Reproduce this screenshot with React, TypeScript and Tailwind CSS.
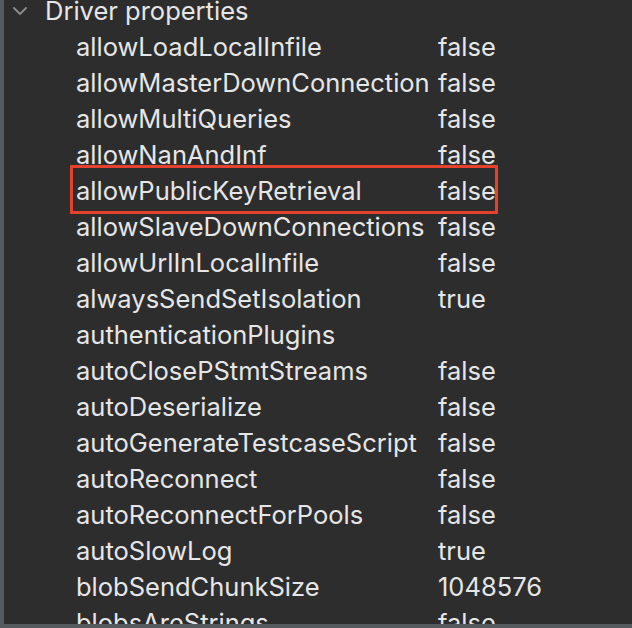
import React from "react";

const props: [string, string][] = [
  ["allowLoadLocalInfile", "false"],
  ["allowMasterDownConnection", "false"],
  ["allowMultiQueries", "false"],
  ["allowNanAndInf", "false"],
  ["allowPublicKeyRetrieval", "false"],
  ["allowSlaveDownConnections", "false"],
  ["allowUrlInLocalInfile", "false"],
  ["alwaysSendSetIsolation", "true"],
  ["authenticationPlugins", ""],
  ["autoClosePStmtStreams", "false"],
  ["autoDeserialize", "false"],
  ["autoGenerateTestcaseScript", "false"],
  ["autoReconnect", "false"],
  ["autoReconnectForPools", "false"],
  ["autoSlowLog", "true"],
  ["blobSendChunkSize", "1048576"],
  ["blobsAreStrings", "false"],
];

export default function App() {
  return (
    <div
      className="w-[632px] h-[628px] overflow-hidden bg-[#555a5e] flex flex-col"
      style={{ fontFamily: "Inter, 'Liberation Sans', sans-serif" }}
    >
      <div className="flex-1 ml-[4px] mb-[4px] bg-[#2d2d2d] overflow-hidden text-[#e6e6e6] text-[25.5px] leading-none">
        <div className="-mt-[7px]">
          {/* group header */}
          <div className="h-[36px] flex items-center">
            <svg
              className="ml-[7px] w-[18px] h-[18px] text-[#8c8c8c]"
              viewBox="0 0 18 18"
              fill="none"
              stroke="currentColor"
              strokeWidth="1.8"
              strokeLinecap="round"
              strokeLinejoin="round"
            >
              <path d="M3 6l6 6 6-6" />
            </svg>
            <span className="ml-[16px]">Driver properties</span>
          </div>

          {props.map(([name, value]) => (
            <div key={name} className="relative h-[36px] flex items-center">
              <span className="ml-[72px] w-[362px] shrink-0 whitespace-nowrap">{name}</span>
              <span>{value}</span>
              {name === "allowPublicKeyRetrieval" && (
                <div className="absolute left-[66px] top-[-8px] w-[428px] h-[49px] border-[3px] border-[#e5412d]" />
              )}
            </div>
          ))}
        </div>
      </div>
    </div>
  );
}
